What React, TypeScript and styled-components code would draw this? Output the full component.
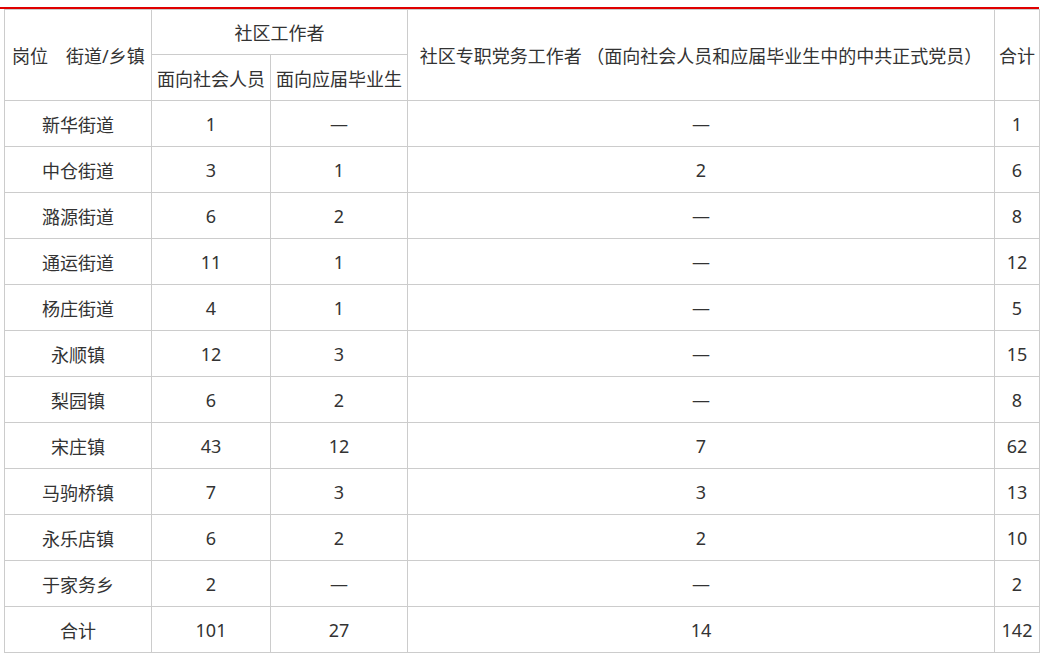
import styled, { createGlobalStyle } from 'styled-components';

const GlobalStyle = createGlobalStyle`
  html, body {
    margin: 0;
    padding: 0;
    background: #fff;
  }
`;

const Wrapper = styled.div`
  width: 1039px;
  margin-top: 7px;
  padding-left: 4px;
  box-sizing: border-box;
  border-top: 2px solid #e00000;
`;

const Table = styled.table`
  width: 1035px;
  table-layout: fixed;
  border-collapse: collapse;
  font-family: "Noto Sans", "Noto Sans CJK SC", sans-serif;
  font-size: 18px;
  color: #333;
`;

const Col = styled.col<{ $w: number }>`
  width: ${(p) => p.$w}px;
`;

const HeadRow = styled.tr<{ $h: number }>`
  height: ${(p) => p.$h}px;
`;

const Th = styled.th<{ $left?: boolean }>`
  border: 1px solid #cccccc;
  font-weight: normal;
  text-align: ${(p) => (p.$left ? 'left' : 'center')};
  padding: ${(p) => (p.$left ? '0 0 0 7px' : '0')};
  white-space: nowrap;
  overflow: hidden;
`;

const Td = styled.td`
  border: 1px solid #cccccc;
  text-align: center;
  padding: 0;
  height: 45px;
  white-space: nowrap;
`;

const DASH = '—';

const widths = [147, 119, 137, 587, 45];

const rows: [string, string, string, string, string][] = [
  ['新华街道', '1', DASH, DASH, '1'],
  ['中仓街道', '3', '1', '2', '6'],
  ['潞源街道', '6', '2', DASH, '8'],
  ['通运街道', '11', '1', DASH, '12'],
  ['杨庄街道', '4', '1', DASH, '5'],
  ['永顺镇', '12', '3', DASH, '15'],
  ['梨园镇', '6', '2', DASH, '8'],
  ['宋庄镇', '43', '12', '7', '62'],
  ['马驹桥镇', '7', '3', '3', '13'],
  ['永乐店镇', '6', '2', '2', '10'],
  ['于家务乡', '2', DASH, DASH, '2'],
  ['合计', '101', '27', '14', '142'],
];

const App = () => {
  return (
    <>
      <GlobalStyle />
      <Wrapper>
        <Table>
          <colgroup>
            {widths.map((w, i) => (
              <Col key={i} $w={w} />
            ))}
          </colgroup>
          <thead>
            <HeadRow $h={45}>
              <Th rowSpan={2} $left>
                岗位　街道/乡镇
              </Th>
              <Th colSpan={2}>社区工作者</Th>
              <Th rowSpan={2}>社区专职党务工作者 （面向社会人员和应届毕业生中的中共正式党员）</Th>
              <Th rowSpan={2}>合计</Th>
            </HeadRow>
            <HeadRow $h={46}>
              <Th>面向社会人员</Th>
              <Th>面向应届毕业生</Th>
            </HeadRow>
          </thead>
          <tbody>
            {rows.map((r) => (
              <tr key={r[0]}>
                {r.map((c, i) => (
                  <Td key={i}>{c}</Td>
                ))}
              </tr>
            ))}
          </tbody>
        </Table>
      </Wrapper>
    </>
  );
};

export default App;
